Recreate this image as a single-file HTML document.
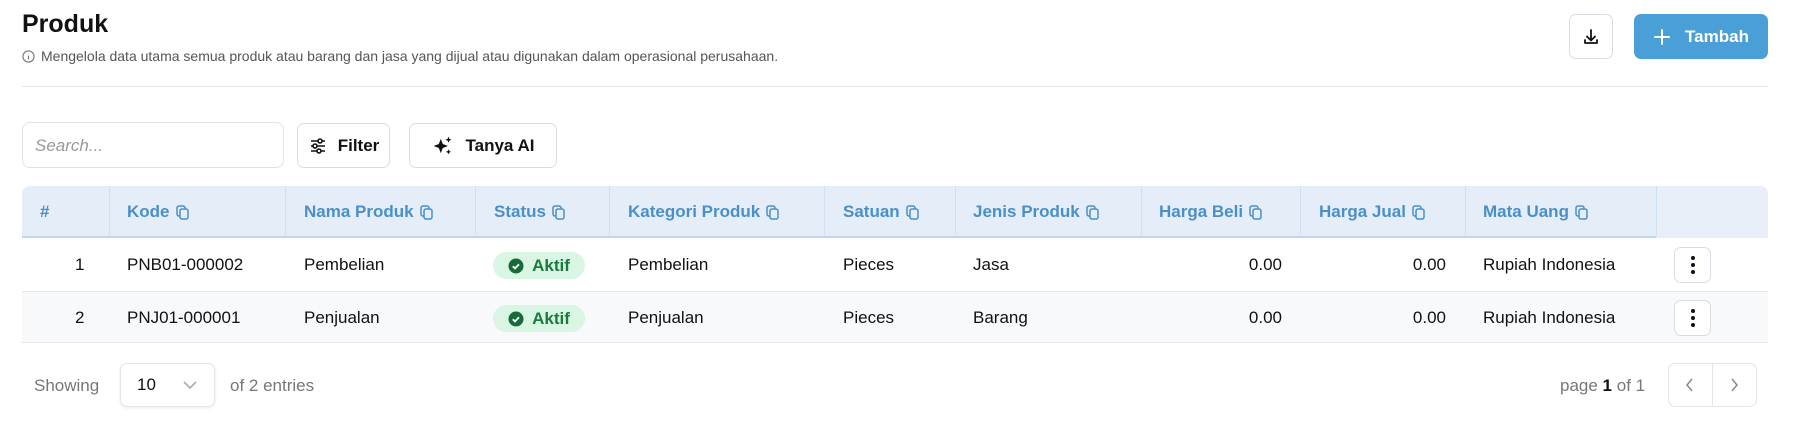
<!DOCTYPE html>
<html><head><meta charset="utf-8"><style>
*{box-sizing:border-box;margin:0;padding:0}
body{width:1804px;height:445px;background:#fff;font-family:"Liberation Sans",Arial,sans-serif;color:#111;position:relative;overflow:hidden}
.a{position:absolute}
h1{position:absolute;left:22px;top:10px;font-size:25px;font-weight:bold;color:#111}
.sub{left:22px;top:48px;font-size:14px;color:#555;display:flex;align-items:center;gap:6px}
.btn{position:absolute;border:1px solid #d9dde3;border-radius:7px;background:#fff;display:flex;align-items:center;justify-content:center;font-weight:bold;font-size:17px;color:#111}
.th{position:absolute;top:186px;height:52px;display:flex;align-items:center;color:#4a90c8;font-weight:bold;font-size:17px;gap:6px}
.td{position:absolute;font-size:17px;color:#111;display:flex;align-items:center;height:52px}
.cp{display:inline-block;width:13px;height:15px;position:relative}
.badge{position:absolute;left:493px;width:92px;height:27px;border-radius:14px;background:#d9f5e3;color:#1b7a3e;font-weight:bold;font-size:17px;display:flex;align-items:center;justify-content:center;gap:8px}
.dots{position:absolute;left:1674px;width:37px;height:36px;border:1px solid #d9dde3;border-radius:7px;background:#fff;display:flex;align-items:center;justify-content:center}
</style></head><body>
<h1>Produk</h1>
<div class="a sub"><svg width="13" height="13" viewBox="0 0 14 14"><circle cx="7" cy="7" r="6" fill="none" stroke="#777" stroke-width="1.2"/><path d="M7 6v4M7 4v.5" stroke="#777" stroke-width="1.3"/></svg>Mengelola data utama semua produk atau barang dan jasa yang dijual atau digunakan dalam operasional perusahaan.</div>
<div class="btn" style="left:1569px;top:14px;width:44px;height:45px"><svg width="20" height="20" viewBox="0 0 20 20" fill="none" stroke="#111" stroke-width="1.8" stroke-linecap="round" stroke-linejoin="round"><path d="M10 3v10M6 9.5l4 4 4-4M4 13v3h12v-3"/></svg></div>
<div class="btn" style="left:1634px;top:14px;width:134px;height:45px;background:#4a9fd6;border-color:#4a9fd6;color:#fff;gap:14px"><svg width="18" height="18" viewBox="0 0 18 18" stroke="#fff" stroke-width="2" stroke-linecap="round"><path d="M9 2v14M2 9h14"/></svg>Tambah</div>
<div class="a" style="left:22px;top:86px;width:1746px;height:1px;background:#e3e5e8"></div>
<div class="a" style="left:22px;top:122px;width:262px;height:46px;border:1px solid #dfe2e6;border-radius:8px;font-size:17px;font-style:italic;color:#999;padding:13px 12px">Search...</div>
<div class="btn" style="left:297px;top:123px;width:93px;height:45px;gap:10px"><svg width="20" height="20" viewBox="0 0 20 20" fill="none" stroke="#111" stroke-width="1.6"><path d="M3 5h14M3 10h14M3 15h14"/><circle cx="12" cy="5" r="2" fill="#fff"/><circle cx="7" cy="10" r="2" fill="#fff"/><circle cx="11" cy="15" r="2" fill="#fff"/></svg>Filter</div>
<div class="btn" style="left:409px;top:123px;width:148px;height:45px;gap:12px"><svg width="22" height="22" viewBox="0 0 20 20" fill="#111"><path d="M8 3.5l1.8 4.7L14.5 10l-4.7 1.8L8 16.5l-1.8-4.7L1.5 10l4.7-1.8z"/><path d="M15 1.5l.8 2 2 .8-2 .8-.8 2-.8-2-2-.8 2-.8z"/><path d="M15 13l.7 1.6 1.6.7-1.6.7-.7 1.6-.7-1.6-1.6-.7 1.6-.7z"/></svg>Tanya AI</div>
<div class="a" style="left:22px;top:186px;width:1746px;height:52px;background:#e5edf8;border-radius:8px 8px 0 0;border-bottom:2px solid #bcd6f2"></div>
<div class="a" style="left:1656px;top:186px;width:112px;height:52px;background:#e9eff8;border-radius:0 8px 0 0"></div>
<div class="a" style="left:22px;top:291px;width:1746px;height:52px;background:#f7f9fb;border-top:1px solid #e3e6ea;border-bottom:1px solid #e3e6ea"></div>
<div class="th" style="left:40px">#</div>
<div class="th" style="left:127px">Kode<svg class="cp" viewBox="0 0 13 15" fill="none" stroke="#4a90c8" stroke-width="1.5"><rect x="1" y="1" width="8" height="10" rx="2"/><rect x="4" y="4" width="8" height="10" rx="2" fill="#e5edf8"/></svg></div>
<div class="th" style="left:304px">Nama Produk<svg class="cp" viewBox="0 0 13 15" fill="none" stroke="#4a90c8" stroke-width="1.5"><rect x="1" y="1" width="8" height="10" rx="2"/><rect x="4" y="4" width="8" height="10" rx="2" fill="#e5edf8"/></svg></div>
<div class="th" style="left:494px">Status<svg class="cp" viewBox="0 0 13 15" fill="none" stroke="#4a90c8" stroke-width="1.5"><rect x="1" y="1" width="8" height="10" rx="2"/><rect x="4" y="4" width="8" height="10" rx="2" fill="#e5edf8"/></svg></div>
<div class="th" style="left:628px">Kategori Produk<svg class="cp" viewBox="0 0 13 15" fill="none" stroke="#4a90c8" stroke-width="1.5"><rect x="1" y="1" width="8" height="10" rx="2"/><rect x="4" y="4" width="8" height="10" rx="2" fill="#e5edf8"/></svg></div>
<div class="th" style="left:843px">Satuan<svg class="cp" viewBox="0 0 13 15" fill="none" stroke="#4a90c8" stroke-width="1.5"><rect x="1" y="1" width="8" height="10" rx="2"/><rect x="4" y="4" width="8" height="10" rx="2" fill="#e5edf8"/></svg></div>
<div class="th" style="left:973px">Jenis Produk<svg class="cp" viewBox="0 0 13 15" fill="none" stroke="#4a90c8" stroke-width="1.5"><rect x="1" y="1" width="8" height="10" rx="2"/><rect x="4" y="4" width="8" height="10" rx="2" fill="#e5edf8"/></svg></div>
<div class="th" style="left:1159px">Harga Beli<svg class="cp" viewBox="0 0 13 15" fill="none" stroke="#4a90c8" stroke-width="1.5"><rect x="1" y="1" width="8" height="10" rx="2"/><rect x="4" y="4" width="8" height="10" rx="2" fill="#e5edf8"/></svg></div>
<div class="th" style="left:1319px">Harga Jual<svg class="cp" viewBox="0 0 13 15" fill="none" stroke="#4a90c8" stroke-width="1.5"><rect x="1" y="1" width="8" height="10" rx="2"/><rect x="4" y="4" width="8" height="10" rx="2" fill="#e5edf8"/></svg></div>
<div class="th" style="left:1483px">Mata Uang<svg class="cp" viewBox="0 0 13 15" fill="none" stroke="#4a90c8" stroke-width="1.5"><rect x="1" y="1" width="8" height="10" rx="2"/><rect x="4" y="4" width="8" height="10" rx="2" fill="#e5edf8"/></svg></div>
<div class="a" style="left:109px;top:186px;width:1px;height:51px;background:#cfe0f3"></div>
<div class="a" style="left:285px;top:186px;width:1px;height:51px;background:#cfe0f3"></div>
<div class="a" style="left:475px;top:186px;width:1px;height:51px;background:#cfe0f3"></div>
<div class="a" style="left:609px;top:186px;width:1px;height:51px;background:#cfe0f3"></div>
<div class="a" style="left:824px;top:186px;width:1px;height:51px;background:#cfe0f3"></div>
<div class="a" style="left:955px;top:186px;width:1px;height:51px;background:#cfe0f3"></div>
<div class="a" style="left:1141px;top:186px;width:1px;height:51px;background:#cfe0f3"></div>
<div class="a" style="left:1300px;top:186px;width:1px;height:51px;background:#cfe0f3"></div>
<div class="a" style="left:1465px;top:186px;width:1px;height:51px;background:#cfe0f3"></div>
<div class="a" style="left:1656px;top:186px;width:1px;height:51px;background:#cfe0f3"></div>

<div class="td" style="top:239px;left:75px">1</div>
<div class="td" style="top:239px;left:127px">PNB01-000002</div>
<div class="td" style="top:239px;left:304px">Pembelian</div>
<div class="badge" style="top:252px"><svg width="16" height="16" viewBox="0 0 16 16"><circle cx="8" cy="8" r="7.5" fill="#176b3a"/><path d="M4.8 8.2l2.2 2.2 4-4.2" stroke="#fff" stroke-width="1.8" fill="none"/></svg>Aktif</div>
<div class="td" style="top:239px;left:628px">Pembelian</div>
<div class="td" style="top:239px;left:843px">Pieces</div>
<div class="td" style="top:239px;left:973px">Jasa</div>
<div class="td" style="top:239px;left:1182px;width:100px;justify-content:flex-end">0.00</div>
<div class="td" style="top:239px;left:1346px;width:100px;justify-content:flex-end">0.00</div>
<div class="td" style="top:239px;left:1483px">Rupiah Indonesia</div>
<div class="dots" style="top:247px"><svg width="4" height="18" viewBox="0 0 4 18" fill="#111"><circle cx="2" cy="2" r="2"/><circle cx="2" cy="9" r="2"/><circle cx="2" cy="16" r="2"/></svg></div>

<div class="td" style="top:292px;left:75px">2</div>
<div class="td" style="top:292px;left:127px">PNJ01-000001</div>
<div class="td" style="top:292px;left:304px">Penjualan</div>
<div class="badge" style="top:305px"><svg width="16" height="16" viewBox="0 0 16 16"><circle cx="8" cy="8" r="7.5" fill="#176b3a"/><path d="M4.8 8.2l2.2 2.2 4-4.2" stroke="#fff" stroke-width="1.8" fill="none"/></svg>Aktif</div>
<div class="td" style="top:292px;left:628px">Penjualan</div>
<div class="td" style="top:292px;left:843px">Pieces</div>
<div class="td" style="top:292px;left:973px">Barang</div>
<div class="td" style="top:292px;left:1182px;width:100px;justify-content:flex-end">0.00</div>
<div class="td" style="top:292px;left:1346px;width:100px;justify-content:flex-end">0.00</div>
<div class="td" style="top:292px;left:1483px">Rupiah Indonesia</div>
<div class="dots" style="top:300px"><svg width="4" height="18" viewBox="0 0 4 18" fill="#111"><circle cx="2" cy="2" r="2"/><circle cx="2" cy="9" r="2"/><circle cx="2" cy="16" r="2"/></svg></div>

<div class="td" style="top:360px;left:34px;color:#777">Showing</div>
<div class="a" style="left:120px;top:363px;width:95px;height:44px;border:1px solid #e3e5e8;border-radius:7px;box-shadow:0 1px 3px rgba(0,0,0,.08);display:flex;align-items:center;justify-content:space-between;padding:0 16px;font-size:17px"><span>10</span><svg width="16" height="10" viewBox="0 0 16 10" fill="none" stroke="#aaa" stroke-width="1.6"><path d="M2 2l6 6 6-6"/></svg></div>
<div class="td" style="top:360px;left:230px;color:#777">of 2 entries</div>
<div class="td" style="top:360px;left:1560px;color:#777">page&nbsp;<b style="color:#111">1</b>&nbsp;of 1</div>
<div class="a" style="left:1668px;top:363px;width:89px;height:44px;border:1px solid #e3e5e8;border-radius:7px;display:flex">
<div style="width:44px;height:42px;border-right:1px solid #e3e5e8;display:flex;align-items:center;justify-content:center"><svg width="10" height="16" viewBox="0 0 10 16" fill="none" stroke="#888" stroke-width="1.5"><path d="M7 2L2 8l5 6"/></svg></div>
<div style="width:44px;height:42px;display:flex;align-items:center;justify-content:center"><svg width="10" height="16" viewBox="0 0 10 16" fill="none" stroke="#888" stroke-width="1.5"><path d="M3 2l5 6-5 6"/></svg></div>
</div>
</body></html>
